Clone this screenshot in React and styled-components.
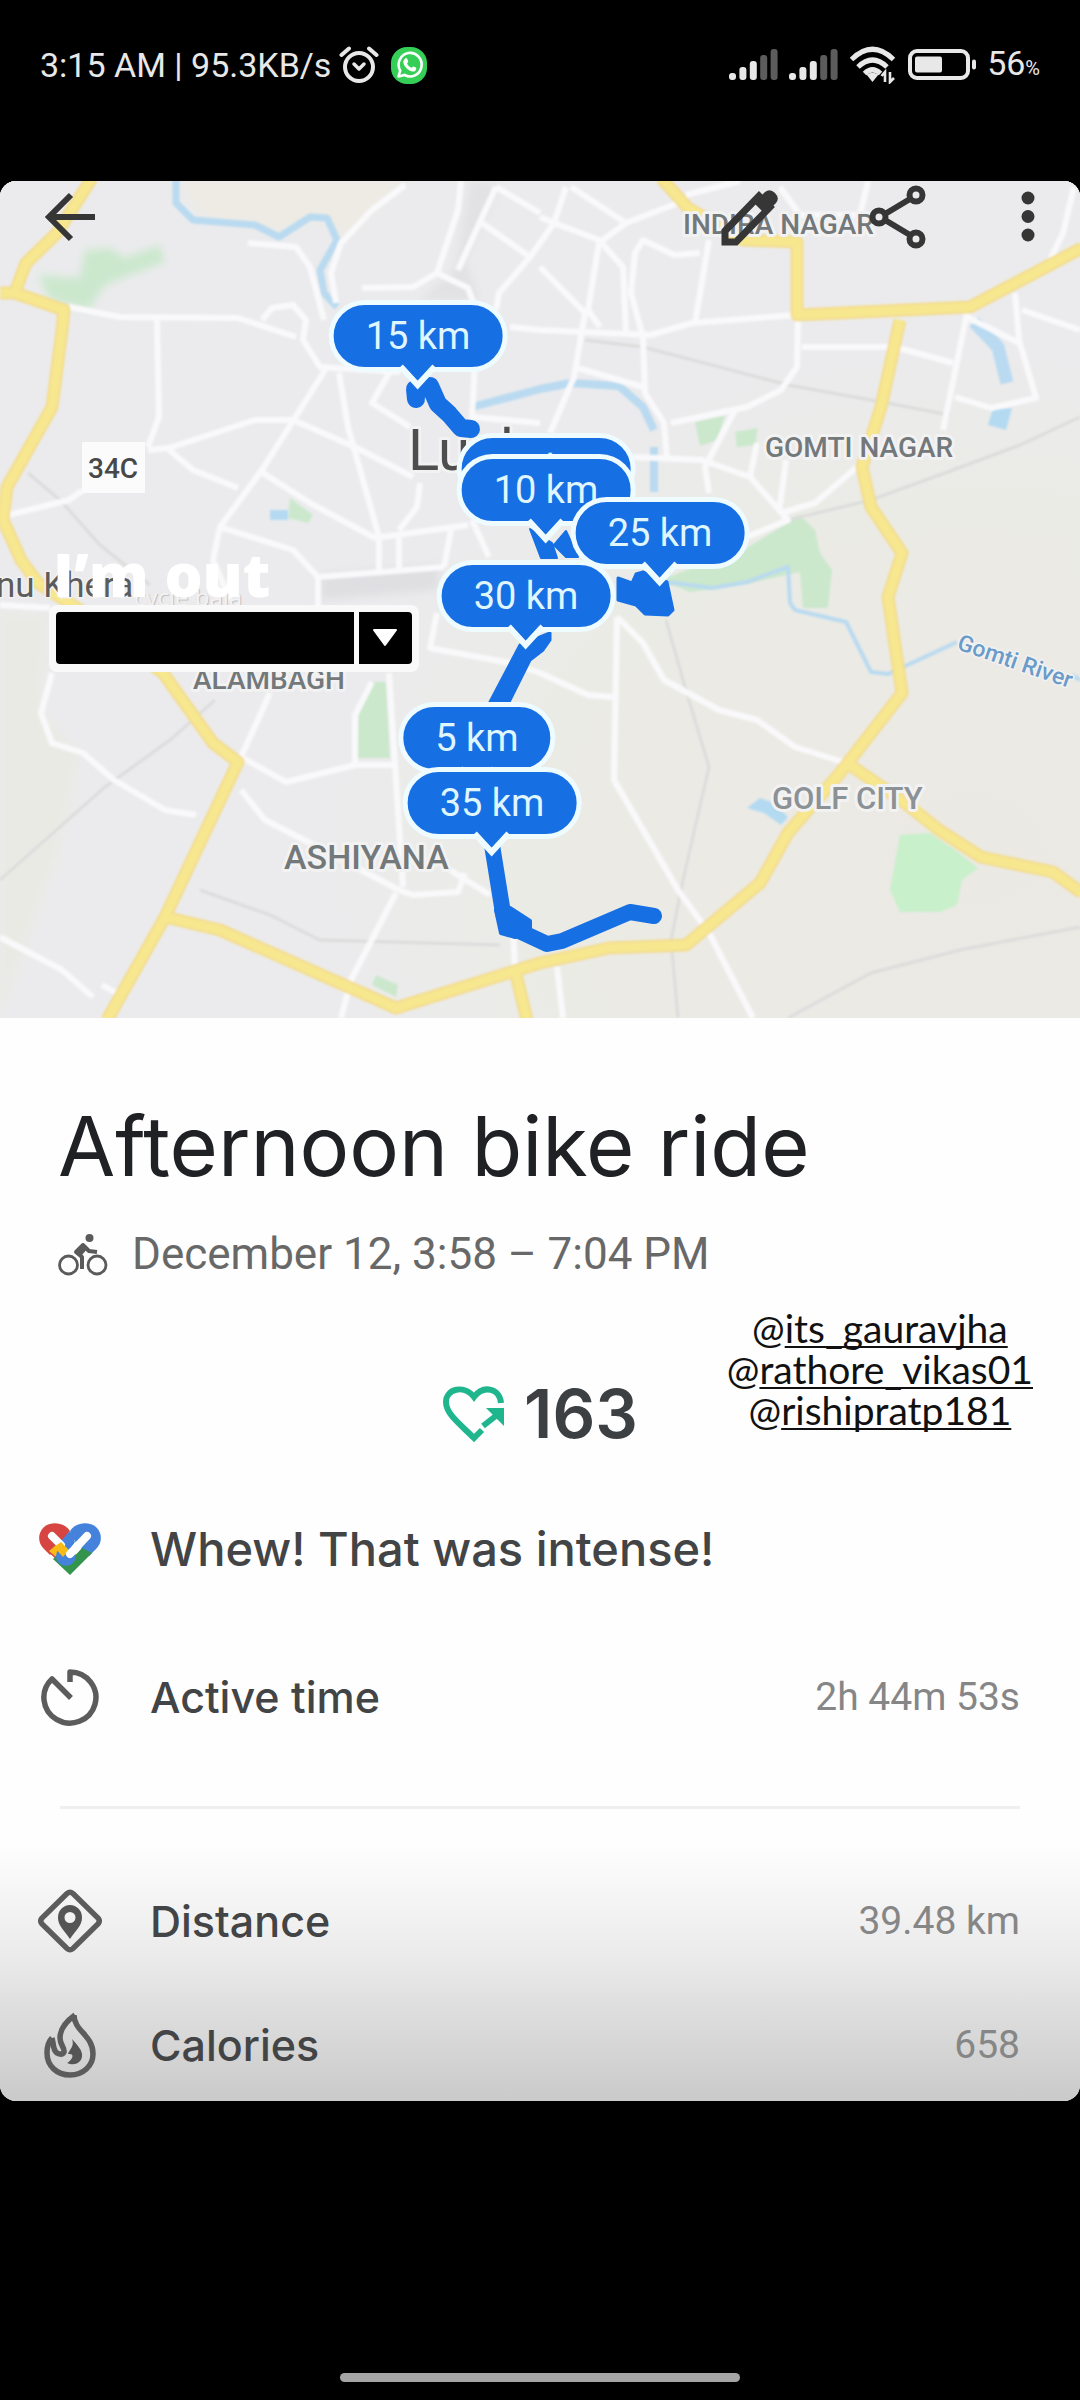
import React from "react";
import styled, { createGlobalStyle } from "styled-components";

const GlobalStyle = createGlobalStyle`
  * { box-sizing: border-box; }
  html, body { margin: 0; background: #000; }
  body { font-family: Roboto, "Liberation Sans", sans-serif; }
  button { border: 0; padding: 0; background: none; cursor: pointer; font: inherit; }
  h1, p, dl, dt, dd, ul { margin: 0; padding: 0; }
`;

const Screen = styled.div`
  min-height: 100vh;
  display: flex;
  flex-direction: column;
  background: #000;
`;

const StatusBar = styled.header`
  display: flex;
  align-items: center;
  justify-content: space-between;
  height: 130px;
  margin-bottom: 51px;
  padding: 0 40px;
  color: #e8e8e8;
  font-size: 34px;
  line-height: 40px;
`;

const StatusGroup = styled.div`
  display: flex;
  align-items: center;
  gap: ${(p) => p.$gap}px;
`;

const Battery = styled.span`
  display: flex;
  align-items: baseline;
`;

const Percent = styled.small`
  font-size: 20px;
`;

const Card = styled.main`
  border-radius: 16px;
  overflow: hidden;
  background: #fefefe;
`;

const MapView = styled.section`
  position: relative;
  aspect-ratio: 1080 / 837;
  overflow: hidden;
  background: #ebebed;
`;

const MapDrawing = styled.svg`
  display: block;
  width: 100%;
  height: 100%;
  font-family: Roboto, "Liberation Sans", sans-serif;
`;

const Toolbar = styled.nav`
  position: absolute;
  inset: 4px 0 auto 0;
  display: flex;
  align-items: center;
  justify-content: space-between;
  padding: 0 38px;
`;

const Actions = styled.div`
  display: flex;
  gap: 84px;
`;

const IconButton = styled.button`
  display: grid;
  place-items: center;
  width: ${(p) => p.$width || 64}px;
  height: 64px;
  color: #363636;
`;

const Pin = styled.div`
  position: absolute;
  left: ${(p) => (p.$x / 1080) * 100}%;
  top: ${(p) => ((p.$y - 181) / 837) * 100}%;
  transform: translate(-50%, -50%);
  height: 72px;
  padding: 0 32px;
  border: 5px solid #eefbff;
  border-radius: 36px;
  background: #176fe4;
  color: #dff6ff;
  font-size: 38px;
  line-height: 62px;
  white-space: nowrap;
`;

const PinTail = styled.svg`
  position: absolute;
  left: 50%;
  top: 58px;
  margin-left: -24px;
`;

const Caption = styled.div`
  position: absolute;
  left: 4.9%;
  top: 42.7%;
  color: #fff;
  font: 800 60px/72px "Open Sans", Inter, sans-serif;
`;

const CaptionEcho = styled.div`
  position: absolute;
  left: 12.4%;
  top: 48%;
  color: #f3f2f4;
  font: 24px/28px "Open Sans", sans-serif;
  text-shadow: 1px 1px 1px #bcbcc0;
`;

const Sticker = styled.div`
  position: absolute;
  left: 4.5%;
  top: 50.7%;
  display: flex;
  gap: 5px;
  padding: 7px 7px 8px;
  border-radius: 8px;
  background: #f9f9fa;
`;

const StickerField = styled.input`
  width: 298px;
  height: 52px;
  border: 0;
  border-radius: 4px 0 0 4px;
  padding: 0 12px;
  background: #000;
  color: #fff;
`;

const StickerButton = styled.button`
  display: grid;
  place-items: center;
  width: 53px;
  height: 52px;
  border-radius: 0 4px 4px 0;
  background: #000;
`;

const Summary = styled.section`
  padding: 80px 58px 0;
`;

const Title = styled.h1`
  color: #202124;
  font: 400 83px/96px Inter, sans-serif;
`;

const When = styled.p`
  display: flex;
  align-items: center;
  gap: 24px;
  margin-top: 34px;
  color: #686868;
  font-size: 44px;
  line-height: 52px;
`;

const ScoreRow = styled.section`
  display: grid;
  grid-template-columns: 1fr auto 1fr;
  align-items: end;
  padding-top: 28px;
`;

const Score = styled.p`
  grid-column: 2;
  display: flex;
  align-items: center;
  gap: 18px;
  color: #3c4043;
  font: 600 67px/74px Inter, sans-serif;
`;

const Handles = styled.ul`
  justify-self: end;
  margin-right: 47px;
  padding-bottom: 20px;
  list-style: none;
  text-align: center;
  color: #111;
  font: 400 39px/41px Lato, sans-serif;
`;

const Handle = styled.a`
  color: inherit;
  text-decoration: none;
  span { text-decoration: underline; text-decoration-thickness: 2px; text-underline-offset: 3px; text-decoration-skip-ink: none; }
`;

const Metrics = styled.dl`
  display: flex;
  flex-direction: column;
`;

const Row = styled.div`
  display: grid;
  grid-template-columns: 64px 1fr auto;
  align-items: center;
  column-gap: 48px;
  height: ${(p) => p.$height}px;
  padding: 0 60px 0 38px;
  > svg { justify-self: center; }
`;

const Headline = styled.p`
  color: #434446;
  font: 500 47px/60px Inter, sans-serif;
`;

const Label = styled.dt`
  color: #434446;
  font: 500 43px/52px Inter, sans-serif;
`;

const Value = styled.dd`
  color: #868686;
  font-size: 39px;
  line-height: 52px;
`;

const Divider = styled.hr`
  width: auto;
  height: 3px;
  margin: 59px 60px 0;
  border: 0;
  background: #efefef;
`;

const Shade = styled.dl`
  display: flex;
  flex-direction: column;
  gap: 12px;
  padding-top: 56px;
  background: linear-gradient(#fefefe 12%, #f4f4f4 32%, #ebebeb 50%, #dddddd 70%, #cacaca 100%);
`;

const HomeArea = styled.footer`
  flex: 1;
  display: flex;
  flex-direction: column;
  justify-content: flex-end;
  align-items: center;
  padding-bottom: 18px;
`;

const HomeBar = styled.div`
  width: 37%;
  height: 9px;
  border-radius: 5px;
  background: #a5a5a5;
`;

const AlarmIcon = () => (
  <svg width="40" height="38" viewBox="0 0 40 38" fill="none" stroke="#e8e8e8" strokeWidth="4" strokeLinecap="round" aria-hidden="true">
    <circle cx="20" cy="21" r="14" />
    <path d="M2.500 9 10 2.500M37.500 9 30 2.500" />
    <path d="m15 18 5 5 5-5" strokeLinejoin="round" strokeWidth="3.500" />
  </svg>
);

const WhatsAppIcon = () => (
  <svg width="36" height="37" viewBox="0 0 36 37" aria-hidden="true">
    <rect width="36" height="37" rx="16" fill="#35cf58" />
    <path d="M7.500 29.500 9.200 23.600A11.500 11.800 0 1 1 13.400 27.900Z" fill="none" stroke="#fff" strokeWidth="2.600" strokeLinejoin="round" />
    <path d="M14.200 11.500c1-.7 1.700-.4 2.100.5l.9 2.300c.2.700-.9 1.700-1.100 2.200.8 2 2.300 3.400 4.300 4.300.6-.2 1.400-1.600 2.100-1.400l2.400 1.200c.9.600.1 2.700-.8 3.300-2 1.300-4.800.4-7.100-1.400-2.300-1.800-4.600-4.800-4.700-7.300 0-1.500.9-3 1.900-3.700Z" fill="#fff" />
  </svg>
);

const SignalIcon = () => (
  <svg width="50" height="32" viewBox="0 0 50 32" aria-hidden="true">
    {[7, 13, 19, 25, 31].map((h, i) => (
      <rect key={h} x={i * 10.4} y={31 - h} width="7" height={h} rx="3" fill={i < 3 ? "#e8e8e8" : "#5c5c5c"} />
    ))}
  </svg>
);

const WifiIcon = () => (
  <svg width="48" height="38" viewBox="0 0 48 38" fill="none" stroke="#e8e8e8" strokeWidth="5" aria-hidden="true">
    <path d="M2.500 13.500Q23.500-7 44.500 13.500" />
    <path d="M9 21Q23.500 7 38 21" />
    <path d="M15.500 27.500Q23.500 20 31.500 27.500" />
    <path d="M17.500 28.500q6-3.500 12 0l-6 7.500Z" fill="#e8e8e8" stroke="none" />
    <path d="M36 36V26l-3.500 4M41 26v10l4-4" strokeWidth="2.600" />
  </svg>
);

const BatteryIcon = () => (
  <svg width="70" height="32" viewBox="0 0 70 32" aria-hidden="true">
    <rect x="3" y="2" width="58" height="27" rx="7" fill="none" stroke="#e8e8e8" strokeWidth="4" />
    <rect x="8" y="7.500" width="27" height="16" rx="2" fill="#e8e8e8" />
    <rect x="65" y="10.500" width="4" height="10" rx="2" fill="#e8e8e8" />
  </svg>
);

const BackIcon = () => (
  <svg width="52" height="50" viewBox="0 0 52 50" fill="none" stroke="currentColor" strokeWidth="6" aria-hidden="true">
    <path d="M51 25H6M27 3 5 25l22 22" />
  </svg>
);

const PencilIcon = () => (
  <svg width="58" height="58" viewBox="0 0 58 58" aria-hidden="true">
    <path d="M4 54V43L38 8l11 11-34 35Z" fill="none" stroke="currentColor" strokeWidth="7" />
    <path d="m33 15 11-11q5-4 10 1t1 10L44 26Z" fill="currentColor" />
  </svg>
);

const ShareIcon = () => (
  <svg width="58" height="64" viewBox="0 0 58 64" fill="none" stroke="currentColor" strokeWidth="6" aria-hidden="true">
    <circle cx="10" cy="32" r="6.500" />
    <circle cx="47" cy="10" r="6.500" />
    <circle cx="47" cy="54" r="6.500" />
    <path d="m16 29 25-15M16 35l25 15" />
  </svg>
);

const MoreIcon = () => (
  <svg width="16" height="54" viewBox="0 0 16 54" fill="currentColor" aria-hidden="true">
    <circle cx="8" cy="8" r="6.500" />
    <circle cx="8" cy="26.500" r="6.500" />
    <circle cx="8" cy="45" r="6.500" />
  </svg>
);

const BikeIcon = () => (
  <svg width="50" height="43" viewBox="0 0 50 43" fill="none" stroke="#5a5a5a" aria-hidden="true">
    <circle cx="10.500" cy="32" r="9" strokeWidth="2.800" />
    <circle cx="39" cy="32" r="9" strokeWidth="2.800" />
    <circle cx="31.500" cy="5" r="4" fill="#5a5a5a" stroke="none" />
    <path d="M24 36V24l-6-5 7-7 6 6 8 1" strokeWidth="4" strokeLinejoin="round" />
    <path d="m17 20 8-10 5 5-6 7Z" fill="#5a5a5a" stroke="none" />
  </svg>
);

const HeartPointsIcon = () => (
  <svg width="64" height="58" viewBox="0 0 64 58" aria-hidden="true">
    <path d="M40 45 32 53C18 39 4 29 4 17 4 4 22-1 32 12 42-1 58 4 59 18" fill="none" stroke="#1fb68e" strokeWidth="6" />
    <path d="m41 41 14-11" fill="none" stroke="#1fb68e" strokeWidth="6" />
    <path d="M44 23h18v18Z" fill="#1fb68e" />
  </svg>
);

const FitIcon = () => (
  <svg width="64" height="54" viewBox="0 0 64 54" aria-hidden="true">
    <path d="M32 9C26 0 13-1 6 5-1 12 0 21 6 27l6 6 20-24Z" fill="#d64541" />
    <path d="M32 9C38 0 51-1 58 5c7 7 6 16 0 22l-7 7-13-13Z" fill="#4582db" />
    <path d="m23 9 12 11-17 17-9-8Z" fill="#d64541" />
    <path d="m22 20 10 9-9 10-12-10Z" fill="#f7bb16" />
    <path d="m22 30 10 9 12-13 10 5-22 22-17-16Z" fill="#34934d" />
    <path d="M28 34 49 14" stroke="#4582db" strokeWidth="20" strokeLinecap="round" strokeDasharray="0 50" />
    <path d="M32 9 22 20l9 9 6-9Z" fill="#4582db" />
    <path d="m31 10-8 10 6 7 12-14Z" fill="#4582db" />
    <path d="m14 14 9 9" stroke="#fefefe" strokeWidth="8" strokeLinecap="round" />
    <path d="m16 25 7-5 8 8-6 7Z" fill="#f7bb16" />
    <path d="M32 32 49 14" stroke="#fefefe" strokeWidth="8" strokeLinecap="round" />
  </svg>
);

const TimerIcon = () => (
  <svg width="60" height="58" viewBox="0 0 60 58" fill="none" stroke="#5c5c5c" strokeWidth="5.500" aria-hidden="true">
    <path d="M30 14V4a26 25.500 0 1 1-18 7L31 30" strokeLinejoin="round" />
  </svg>
);

const DistanceIcon = () => (
  <svg width="64" height="66" viewBox="0 0 64 66" aria-hidden="true">
    <path d="m29 5.500q3-2.500 6 0L60 30q2.500 3 0 6L35 60.500q-3 2.500-6 0L4 36q-2.500-3 0-6Z" fill="none" stroke="#5c5c5c" strokeWidth="5.500" />
    <path fillRule="evenodd" d="M32 17a12 12.500 0 0 0-12 13c0 8 7 13 12 21 5-8 12-13 12-21a12 12.500 0 0 0-12-13Zm0 7a5.500 5.500 0 1 1 0 11 5.500 5.500 0 0 1 0-11Z" fill="#555" />
  </svg>
);

const FlameIcon = () => (
  <svg width="52" height="66" viewBox="0 0 52 66" aria-hidden="true">
    <path d="M30 3c0 16 19 20 19 39 0 12-10 21-23 21S3 54 3 41c0-6 1-11 5-15" fill="none" stroke="#5c5c5c" strokeWidth="5.500" />
    <path d="M31 3C24 8 16 15 16 26c0 7 5 10 4 14-2 4-9 2-10-4-1-3-1-7-2-10" fill="none" stroke="#5c5c5c" strokeWidth="5.500" />
    <path d="M28 27c3 7-3 11-4 15 8-1 4 6-1 9 9 4 16-2 15-9-1-6-6-10-10-15Z" fill="#555" />
  </svg>
);

const minorRoads = [
  "M69 307 120 317 238 318 296 337",
  "M157 320 159 417 148 447",
  "M0 517 69 500 83 490",
  "M148 450 169 448 255 420 293 420 355 447 413 477",
  "M169 450 193 470 238 488",
  "M327 367 262 470 220 527 213 560 230 600",
  "M339 373 348 427 379 537",
  "M258 470 310 503 375 538 468 525",
  "M220 527 293 550 318 577 444 567",
  "M318 577V612",
  "M379 538V570M399 538V570",
  "M420 483 417 507 399 530",
  "M451 530 444 567M472 520 489 557",
  "M389 373 372 403 410 427",
  "M262 320 272 308 293 305 306 320 303 340 320 367 400 372",
  "M248 243 296 247 310 267 324 320",
  "M405 185 372 210 341 243 331 273 336 303",
  "M461 181 458 210 437 273 413 287 362 288",
  "M496 187 458 270M437 273 468 288 474 304",
  "M496 187 540 213M482 223 530 257 499 293 496 310",
  "M510 327 540 330 650 335 692 323 795 315",
  "M475 363 472 417 540 423",
  "M566 187 554 223 530 257",
  "M571 187 626 223M540 217 554 223 599 240 623 267 626 333",
  "M678 203 626 223 599 243 588 310 600 327",
  "M540 267 585 313 574 377 550 433",
  "M700 253 674 255 643 240 635 253 631 293 643 337 645 393 664 423 667 460",
  "M709 240 695 323",
  "M686 195 740 181M780 187 800 215H860L868 181",
  "M798 320 797 367 781 390 747 407 671 423",
  "M802 347 895 347 953 363",
  "M967 313 943 430M955 397 991 408 1036 398 1019 340 1015 293M967 317 1019 343M1022 310 1080 330",
  "M1074 187 1063 233 1050 260",
  "M736 408 705 467 709 493M633 457 702 460 750 477 788 520 747 537M757 443 750 477M786 460 779 513M857 467 815 503 781 513",
  "M574 367 643 387",
  "M617 617 614 780 678 890 709 933 753 1018",
  "M617 617 643 643 664 680 719 710 757 720 795 747 843 762",
  "M437 613 430 648 510 663 540 673 588 695 614 697",
  "M557 967 563 1018M513 930 515 970",
  "M52 673 41 713 52 743 83 753 114 780 165 810 196 815",
  "M270 693 241 757 286 782 355 765 393 765",
  "M241 790 265 820 310 843 399 890 413 895 458 892 465 873",
  "M389 673 396 780 403 887M372 682 355 715V765",
  "M396 893 351 980 341 1018",
  "M0 937 62 970 93 997M102 985 120 995",
  "M0 605 50 608M450 870 490 895",
];

const highways = [
  "M92 178 57 233 26 263 15 292M0 293H15L64 310 62 330 52 407 7 487 3 520 21 560 38 583 80 610 163 673 213 743 238 762 165 917 107 1020",
  "M165 917 220 930 396 1008 540 963 609 948 686 945 760 883 788 833 840 773 902 693 888 597 902 553 871 507 862 467 881 407 900 320",
  "M850 765 905 803 939 830 981 857 1053 872 1082 893",
  "M661 178 688 208 743 240 797 242V315L970 307 1082 248",
  "M515 970 527 1020",
];

const MapArt = () => (
  <MapDrawing viewBox="0 181 1080 837" preserveAspectRatio="xMidYMid slice" role="img" aria-label="Ride route through Lucknow">
    <defs>
      <radialGradient id="land" cx="0.9" cy="0.8" r="0.6">
        <stop offset="0" stopColor="#ebe9e4" />
        <stop offset="0.7" stopColor="#ebebe6" />
        <stop offset="1" stopColor="#ebebed" />
      </radialGradient>
      <filter id="soft"><feGaussianBlur stdDeviation="1" /></filter>
      <filter id="softer"><feGaussianBlur stdDeviation="4" /></filter>
    </defs>
    <rect y="181" width="1080" height="837" fill="#ebebed" />
    <rect y="181" width="1080" height="837" fill="url(#land)" />
    <g filter="url(#softer)">
      <path d="M181 181H405L341 240 320 215 280 232 200 215Z" fill="#eeebe4" />
      <path d="M0 610 48 615 42 713 80 753 60 850 0 1018Z" fill="#eaeae5" />
      <path d="M85 250 110 248 125 258 160 245 165 262 130 275 105 285 88 310 50 300 38 275 80 278Z" fill="#cbe8cd" />
      <path d="M320 575 440 565 437 590 320 600Z" fill="#dfdfe2" />
      <path d="M470 181 455 270 420 300 480 300 465 260 500 185Z" fill="#e2e2e4" />
    </g>
    <g filter="url(#soft)" fill="#cbe8cc">
      <path d="M695 422 725 415 718 440 700 446Z" />
      <path d="M735 432 758 428 755 445 737 447Z" />
      <path d="M660 580 747 548 800 515 815 530 820 553 832 570 828 608H803L800 572 755 582 690 592Z" />
      <path d="M900 835 930 833 955 850 978 868 962 880 957 905 940 912H900L890 890Z" fill="#c8f0cb" />
      <path d="M372 682H386L390 758H355L358 715Z" />
      <path d="M376 975 398 985 396 997 372 985Z" />
      <path d="M290 498 313 515 308 523 288 518Z" />
    </g>
    <g filter="url(#soft)" fill="none" stroke="#dcdcdc" strokeWidth="3">
      <path d="M585 340 643 347 788 385 871 400 950 415M788 520 871 500 953 470 1020 445 1080 417" />
      <path d="M666 620 688 697 709 767 683 880 671 940 678 1018M788 1018 871 973 960 950 1080 927" />
      <path d="M0 880 105 787 170 740 215 700M200 890 270 915 320 940 500 945M28 473 60 500 100 545 150 585" />
    </g>
    <g filter="url(#soft)" fill="none" stroke="#b9daf0" strokeWidth="6" strokeLinejoin="round">
      <path d="M176 178V203L193 220 255 225 279 237 310 217 327 218 337 240 320 270 324 293 337 307" strokeWidth="7" />
      <path d="M472 407 540 389 571 383 619 386 643 407 654 430M654 447V492" strokeWidth="8" />
      <path d="M974 322 998 347 1007 383" strokeWidth="13" />
      <path d="M667 582 712 588 747 582 788 567 790 603 795 610 846 622 871 672 888 674 957 642M1072 675 1080 680" strokeWidth="4" />
      <path d="M993 408H1012L1006 430 988 425ZM747 808 760 798 774 803 788 817 781 825 764 813ZM270 510H288V520H270Z" fill="#b4daf2" stroke="none" />
    </g>
    <g filter="url(#soft)" fill="none" strokeLinejoin="round">
      {minorRoads.map((d) => <path key={d} d={d} stroke="#f9f9fb" strokeWidth="6" />)}
      {highways.map((d) => <path key={d} d={d} stroke="#f3dc8f" strokeWidth="13" />)}
      {highways.map((d) => <path key={d + "in"} d={d} stroke="#f7e78f" strokeWidth="9" />)}
    </g>
    <g fontWeight="500" fill="#73787a" stroke="#f2f2f3" strokeWidth="6" strokeLinejoin="round" paintOrder="stroke" fontSize="28">
      <text x="683" y="234">INDIRA NAGAR</text>
      <text x="765" y="457">GOMTI NAGAR</text>
      <text x="772" y="809" fontSize="31" fill="#8b9194">GOLF CITY</text>
      <text x="284" y="869" fontSize="34">ASHIYANA</text>
      <text x="193" y="689">ALAMBAGH</text>
      <rect x="82" y="442" width="63" height="51" fill="#fbfbfc" stroke="none" />
      <text x="88" y="478" fill="#484848" stroke="none">34C</text>
      <text x="-4" y="597" fill="#5c5c5c" fontSize="35" fontWeight="400" strokeWidth="3">nu Khera</text>
      <text x="408" y="470" fill="#4e4e4e" fontSize="58" fontWeight="400">Luck</text>
      <text x="956" y="649" fill="#6b9bc8" fontSize="23" strokeWidth="3" transform="rotate(19 956 649)">Gomti River</text>
    </g>
    <g fill="#176fe4" stroke="#176fe4" strokeLinejoin="round" strokeLinecap="round">
      <path d="M415 389 416 399M430 386 438 404 449 414 461 428 471 429" fill="none" strokeWidth="18" />
      <path d="M530 529 541 558H557L552 543ZM554 545 566 531 578 557H566Z" strokeWidth="2" />
      <path d="M618 578 632 583 636 574 643 572 667 582 673 610 668 615 645 614 636 605 618 600Z" strokeWidth="3" />
      <path d="M520 645 490 702H509L530 660 543 650 550 640V633Z" strokeWidth="3" />
      <path d="M492 845 503 913 517 930 547 944 562 941 630 912 654 916" fill="none" strokeWidth="16" />
      <path d="M496 910 510 908 530 921 530 933 515 937 501 933Z" strokeWidth="4" />
    </g>
  </MapDrawing>
);

const pins = [
  { label: "15 km", x: 418, y: 336 },
  { label: "20 km", x: 546, y: 469 },
  { label: "10 km", x: 546, y: 490 },
  { label: "25 km", x: 660, y: 533 },
  { label: "30 km", x: 526, y: 596 },
  { label: "5 km", x: 477, y: 738 },
  { label: "35 km", x: 492, y: 803 },
];

const handles = ["its_gauravjha", "rathore_vikas01", "rishipratp181"];

export default function App() {
  return (
    <>
      <GlobalStyle />
      <Screen>
        <StatusBar>
          <StatusGroup $gap={12}>
            <StatusGroup $gap={8}>
              <span>3:15 AM | 95.3KB/s</span>
              <AlarmIcon />
            </StatusGroup>
            <WhatsAppIcon />
          </StatusGroup>
          <StatusGroup $gap={10}>
            <SignalIcon />
            <SignalIcon />
            <WifiIcon />
            <BatteryIcon />
            <Battery>56<Percent>%</Percent></Battery>
          </StatusGroup>
        </StatusBar>
        <Card>
          <MapView>
            <MapArt />
            {pins.map((p) => (
              <Pin key={p.label} $x={p.x} $y={p.y}>
                {p.label}
                <PinTail width="48" height="32" viewBox="0 0 48 32" aria-hidden="true">
                  <path d="M7 3.500 24 22 41 3.500" fill="#176fe4" stroke="#eefbff" strokeWidth="6" />
                  <path d="M9 0H39L24 17Z" fill="#176fe4" />
                </PinTail>
              </Pin>
            ))}
            <CaptionEcho>cycle bala</CaptionEcho>
            <Caption>I’m out</Caption>
            <Sticker>
              <StickerField type="text" aria-label="Sticker text" />
              <StickerButton type="button" aria-label="Show options">
                <svg width="28" height="20" viewBox="0 0 28 20" aria-hidden="true">
                  <path d="M3 2H25L14 17Z" fill="#fff" stroke="#fff" strokeWidth="2" strokeLinejoin="round" />
                </svg>
              </StickerButton>
            </Sticker>
            <Toolbar aria-label="Activity">
              <IconButton type="button" aria-label="Back"><BackIcon /></IconButton>
              <Actions>
                <IconButton type="button" aria-label="Edit"><PencilIcon /></IconButton>
                <IconButton type="button" aria-label="Share"><ShareIcon /></IconButton>
                <IconButton type="button" $width={28} aria-label="More"><MoreIcon /></IconButton>
              </Actions>
            </Toolbar>
          </MapView>
          <Summary>
            <Title>Afternoon bike ride</Title>
            <When><BikeIcon />December 12, 3:58 – 7:04 PM</When>
          </Summary>
          <ScoreRow>
            <Score><HeartPointsIcon />163</Score>
            <Handles>
              {handles.map((h) => (
                <li key={h}><Handle href={"#" + h}>@<span>{h}</span></Handle></li>
              ))}
            </Handles>
          </ScoreRow>
          <Row $height={196}>
            <FitIcon />
            <Headline>Whew! That was intense!</Headline>
          </Row>
          <Metrics>
            <Row $height={100}>
              <TimerIcon />
              <Label>Active time</Label>
              <Value>2h 44m 53s</Value>
            </Row>
          </Metrics>
          <Divider />
          <Shade>
            <Row $height={112}>
              <DistanceIcon />
              <Label>Distance</Label>
              <Value>39.48 km</Value>
            </Row>
            <Row $height={112}>
              <FlameIcon />
              <Label>Calories</Label>
              <Value>658</Value>
            </Row>
          </Shade>
        </Card>
        <HomeArea>
          <HomeBar />
        </HomeArea>
      </Screen>
    </>
  );
}
